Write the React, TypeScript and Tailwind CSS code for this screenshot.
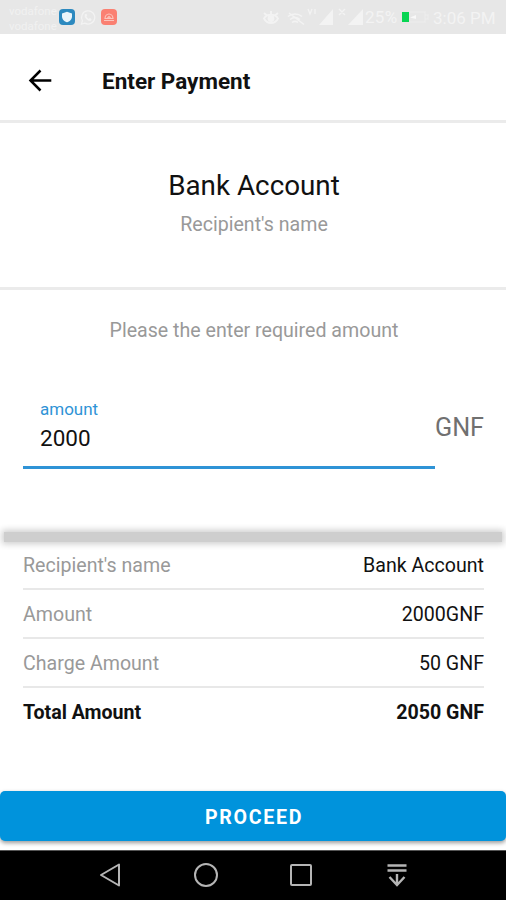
import { clsx } from "clsx";

const summary = [
  { label: "Recipient's name", value: "Bank Account" },
  { label: "Amount", value: "2000GNF" },
  { label: "Charge Amount", value: "50 GNF" },
  { label: "Total Amount", value: "2050 GNF", total: true },
];

const StatusBar = () => (
  <div className="flex h-[34px] shrink-0 items-center justify-between bg-[#e7e7e7] pl-[9px] pr-[11px] text-[#f3f3f3]">
    <div className="flex items-center">
      <div className="w-[50px] pt-[3px] text-[11.5px] leading-[15px] text-[#f1f1f1]">
        <div>vodafone</div>
        <div>vodafone</div>
      </div>
      <svg width="16" height="16" viewBox="0 0 16 16">
        <rect width="16" height="16" rx="4" fill="#2c89bf" />
        <path d="M8 2.800 L13 4.500 V7.500 C13 10.500 10.500 12.500 8 13.200 C5.500 12.500 3 10.500 3 7.500 V4.500 Z" fill="#e9f5fb" />
      </svg>
      <svg className="ml-[5px]" width="16" height="17" viewBox="0 0 17 17" fill="none" stroke="#f3f3f3" strokeWidth="1.300">
        <path d="M1.500 15.500 L2.600 11.900 A7 7 0 1 1 5.200 14.500 Z" />
        <path d="M6 5 C5 8 8.500 12 11.700 11.200 M6 5 L7 6.800 M11.700 11.200 L10 9.500" strokeWidth="1.800" />
      </svg>
      <svg className="ml-[5px]" width="16" height="16" viewBox="0 0 16 16">
        <rect width="16" height="16" rx="4" fill="#fa8072" />
        <path d="M3 11.500 H13 M4 9.500 A4 4.500 0 0 1 12 9.500 Z M6.500 9 L8 7.500 L9.500 9" fill="none" stroke="#fbc5bd" strokeWidth="1.200" />
      </svg>
    </div>
    <div className="flex items-center">
      <svg width="103" height="22" viewBox="0 0 103 22" fill="none" stroke="currentColor" strokeWidth="1.800">
        <path d="M2 12.500 C5 7.500 13 7.500 16 12.500 C13 18.500 5 18.500 2 12.500 Z M2 7 L5 9.500 M9 5 V8 M16 7 L13 9.500" />
        <circle cx="9" cy="12.500" r="2.500" fill="currentColor" />
        <path d="M26 10.500 C30 7 36 7 40 10.500 M28 13.500 C31 11 35 11 38 13.500 M30 16.500 C32 15 34 15 36 16.500 M27 7 L42 18.500" strokeWidth="1.500" />
        <path d="M46 3 L48 8 L50 3 M53 3 V8 M77 3 L83 9 M83 3 L77 9" strokeWidth="1.300" />
        <path d="M71 3 V19 H57 Z M101 3 V19 H86 Z" fill="currentColor" stroke="none" />
      </svg>
      <span className="w-[35px] text-[17px] leading-none tracking-[0.300px]">25%</span>
      <svg width="33" height="14" viewBox="0 0 33 14">
        <rect x="2" y="2" width="7" height="10" fill="#08d553" />
        <path d="M9 2 H25 V12 H9 M25 5 H28 V9 H25" fill="none" stroke="#ececec" strokeWidth="1.500" />
        <path d="M10 7.500 L16 5 V9 Z" fill="#f8f8f8" />
      </svg>
      <span className="w-[62px] whitespace-nowrap pt-[2px] text-[17px] leading-none">3:06 PM</span>
    </div>
  </div>
);

const Header = () => (
  <header className="flex h-[89px] shrink-0 items-center border-b-[3px] border-[#ebebeb] pl-7 pt-[7px]">
    <svg width="24" height="24" viewBox="0 0 24 24" fill="none" stroke="#000" strokeWidth="2.500">
      <path d="M23.300 11.500 H2.500 M12.500 1.500 L2.500 11.500 L12.500 21.500" />
    </svg>
    <h1 className="ml-[50px] text-[22.5px] font-bold leading-7 text-[#111]">Enter Payment</h1>
  </header>
);

const NavBar = () => (
  <nav className="flex h-[50px] shrink-0 items-center border-t border-[#555] bg-black pb-px pl-[98px] text-[#b5b5b5]">
    <svg width="24" height="26" viewBox="0 0 24 26" fill="none" stroke="currentColor" strokeWidth="2" strokeLinejoin="round">
      <path d="M21 2.500 V23.500 L3 13 Z" />
    </svg>
    <svg className="ml-[71px]" width="26" height="26" viewBox="0 0 26 26" fill="none" stroke="currentColor" strokeWidth="2">
      <circle cx="13" cy="13" r="11" />
    </svg>
    <svg className="ml-[70px]" width="24" height="24" viewBox="0 0 24 24" fill="none" stroke="currentColor" strokeWidth="2">
      <rect x="2" y="2" width="20" height="20" rx="1" />
    </svg>
    <svg className="ml-[74px]" width="20" height="24" viewBox="0 0 20 24" fill="none" stroke="currentColor" strokeWidth="2.400">
      <path d="M0.500 2.500 H19.500 M0.500 7.500 H19.500 M10 11 V22 M2.500 14 L10 22 L17.500 14" />
    </svg>
  </nav>
);

const App = () => {
  return (
    <div className="flex h-screen w-full flex-col overflow-hidden bg-white font-['Roboto',sans-serif]">
      <StatusBar />
      <Header />

      <section className="flex h-[167px] shrink-0 flex-col items-center border-b-[3px] border-[#ebebeb] pt-[45px]">
        <h2 className="pl-[2px] text-[27.8px] leading-9 text-[#111]">Bank Account</h2>
        <p className="mt-[9px] pl-[2px] text-[19.6px] leading-6 text-[#999]">Recipient's name</p>
      </section>

      <section className="h-[242px] shrink-0 pt-[29px]">
        <p className="pl-[2px] text-center text-[19.6px] leading-6 text-[#999]">
          Please the enter required amount
        </p>
        <div className="mt-[56px] flex justify-between pl-[23px] pr-[22px]">
          <div className="h-[70px] w-[412px] shrink-0 border-b-[3px] border-[#2f93d6] pl-[17px]">
            <label className="block text-[17px] leading-5 text-[#2f93d6]">amount</label>
            <div className="mt-[5px] text-[22.5px] leading-7 text-[#111]">2000</div>
          </div>
          <span className="mt-[13px] text-[25.2px] leading-8 text-[#707070]">GNF</span>
        </div>
      </section>

      {/* raised divider, fades out at both ends */}
      <div className="mx-[4px] h-[10px] shrink-0 bg-[#cecece] shadow-[0_0_6px_2px_#cecece]" />

      <section className="-mt-px flex-1 pl-[23px] pr-[22px]">
        {summary.map((row) => (
          <div
            key={row.label}
            className={clsx(
              "flex h-[49px] items-center justify-between text-[19.6px] leading-6",
              row.total ? "pt-px font-bold text-[#111]" : "border-b-2 border-[#e8e8e8] pt-[3px]",
            )}
          >
            <span className={row.total ? "" : "text-[#999]"}>{row.label}</span>
            <span className="text-[#111]">{row.value}</span>
          </div>
        ))}
      </section>

      <button
        type="button"
        className="mb-[9px] h-[50px] w-full shrink-0 rounded-[5px] bg-[#0093dc] pl-[2px] pt-[3px] text-[19.6px] font-bold tracking-[1.7px] text-white shadow-[0_2px_4px_rgba(0,0,0,0.4)]"
      >
        PROCEED
      </button>

      <NavBar />
    </div>
  );
};

export default App;
